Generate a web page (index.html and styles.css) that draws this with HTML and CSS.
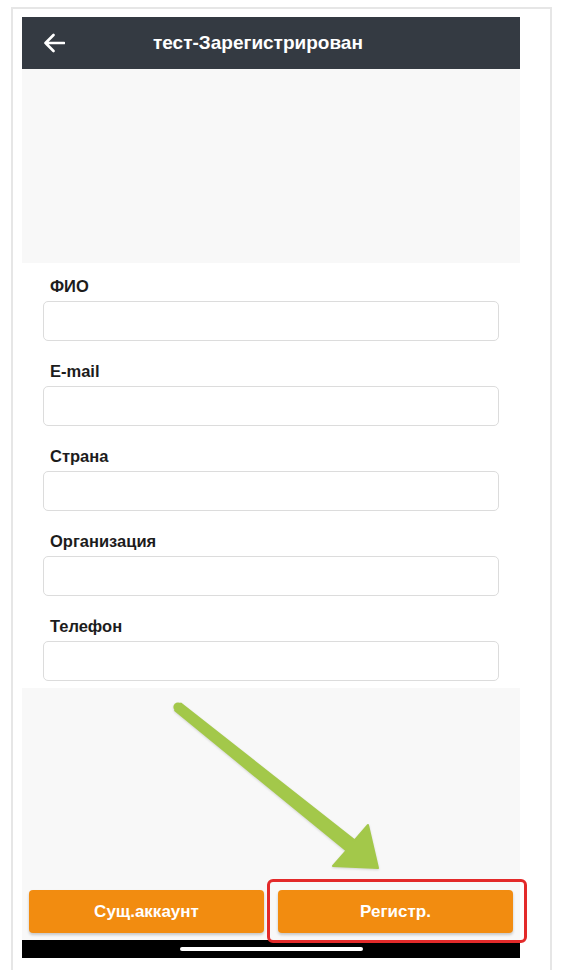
FILE: index.html
```html
<!DOCTYPE html>
<html lang="ru">
<head>
    <meta charset="UTF-8">
    <meta name="viewport" content="width=device-width, initial-scale=1.0">
    <title>тест-Зарегистрирован</title>
    <link rel="stylesheet" href="styles.css">
</head>
<body>
    <div class="frame">
        <div class="screen">
            <div class="header">
                <svg class="back" width="22" height="20" viewBox="0 0 22 20">
                    <path d="M21 10H2.5M10.5 2L2.5 10l8 8" fill="none" stroke="#fff" stroke-width="2.6" stroke-linecap="round" stroke-linejoin="round"/>
                </svg>
                <div class="title">тест-Зарегистрирован</div>
            </div>

            <div class="banner"></div>

            <div class="form">
                <div class="field">
                    <label for="fio">ФИО</label>
                    <input type="text" id="fio">
                </div>
                <div class="field">
                    <label for="email">E-mail</label>
                    <input type="text" id="email">
                </div>
                <div class="field">
                    <label for="country">Страна</label>
                    <input type="text" id="country">
                </div>
                <div class="field">
                    <label for="org">Организация</label>
                    <input type="text" id="org">
                </div>
                <div class="field">
                    <label for="phone">Телефон</label>
                    <input type="text" id="phone">
                </div>
            </div>

            <div class="bottom">
                <div class="buttons">
                    <button>Сущ.аккаунт</button>
                    <button>Регистр.</button>
                </div>
            </div>

            <div class="homebar"><span></span></div>
        </div>
    </div>

    <!-- annotations drawn over the screenshot -->
    <svg class="arrow" width="563" height="970" viewBox="0 0 563 970">
        <polygon points="175.2,710.5 180.8,703.5 354.6,840.4 368,825 378,868 333,866 346.4,850.6"
                 fill="#a3c84a" stroke="#a3c84a" stroke-width="2" stroke-linejoin="round"/>
        <circle cx="178" cy="707" r="4.6" fill="#a3c84a"/>
    </svg>
    <div class="highlight"></div>
</body>
</html>
```

FILE: styles.css
```css
body {
    font-family: "Liberation Sans", Arial, sans-serif;
    margin: 0;
    background-color: white;
    overflow: hidden;
}
.frame {
    box-sizing: border-box;
    margin: 7px 0 0 11px;
    width: 541px;
    padding: 8px 30px 20px 9px;
    border: 2px solid #e6e6e6;
    border-bottom: none;
}
.screen {
    width: 498px;
}
.header {
    height: 52px;
    background-color: #343a42;
    display: flex;
    align-items: center;
    padding-left: 21px;
}
.back {
    display: block;
}
.title {
    margin-left: 88px;
    color: white;
    font-size: 19px;
    font-weight: bold;
}
.banner {
    height: 194px;
    background-color: #f8f8f8;
}
.form {
    padding: 13px 21px 7px 21px;
    background-color: white;
}
.field {
    display: flex;
    flex-direction: column;
    gap: 5px;
    margin-bottom: 20px;
}
.field:last-child {
    margin-bottom: 0;
}
.field label {
    font-size: 16.5px;
    line-height: 20px;
    font-weight: bold;
    color: #1c1c1c;
    padding-left: 7px;
}
.field input {
    height: 40px;
    box-sizing: border-box;
    border: 1px solid #dcdcdc;
    border-radius: 5px;
    background: white;
}
.bottom {
    height: 252px;
    background-color: #f8f8f8;
    display: flex;
    flex-direction: column;
    justify-content: flex-end;
    padding-bottom: 7px;
    box-sizing: border-box;
}
.buttons {
    display: flex;
    gap: 14px;
    padding: 0 7px;
}
.buttons button {
    flex: 1;
    height: 43px;
    border: none;
    border-radius: 4px;
    background-color: #f28c10;
    color: white;
    font-family: "Liberation Sans", Arial, sans-serif;
    font-size: 17px;
    font-weight: bold;
    box-shadow: 0 2px 3px rgba(0,0,0,0.2);
}
.homebar {
    height: 18px;
    background-color: black;
    display: flex;
    justify-content: center;
    align-items: flex-start;
}
.homebar span {
    margin-top: 7px;
    width: 183px;
    height: 4px;
    border-radius: 2px;
    background-color: white;
}
.arrow {
    position: absolute;
    top: 0;
    left: 0;
    filter: drop-shadow(0 1px 1px rgba(0,0,0,0.15));
}
.highlight {
    position: absolute;
    left: 267px;
    top: 879px;
    width: 260px;
    height: 64px;
    box-sizing: border-box;
    border: 3px solid #e32a2a;
    border-radius: 6px;
}
```
